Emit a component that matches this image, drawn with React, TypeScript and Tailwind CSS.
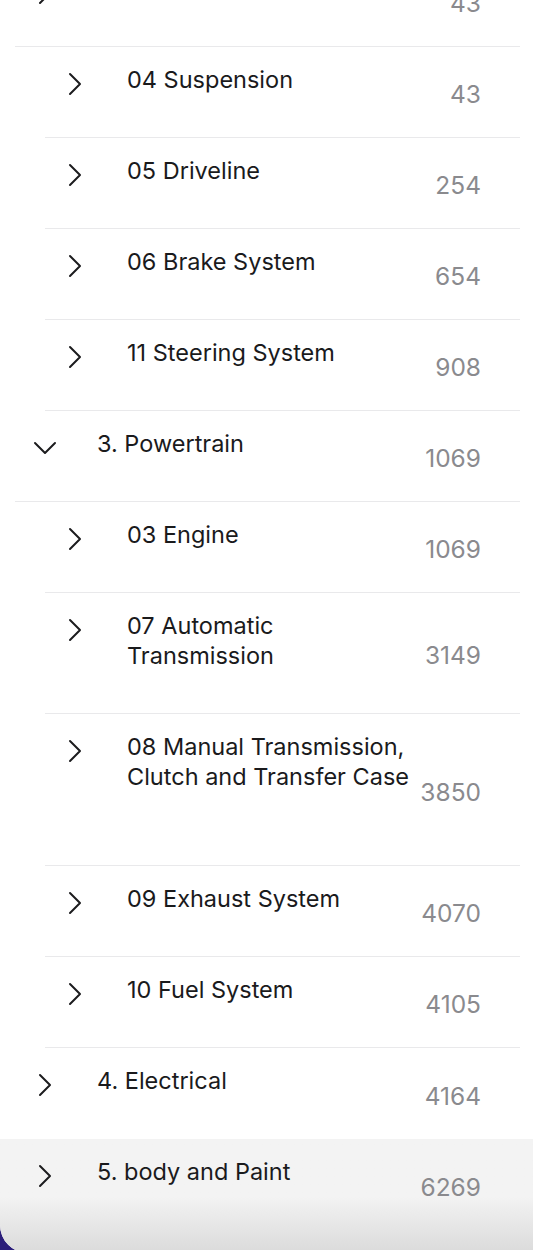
import React from "react";

type Row = {
  level: 0 | 1;
  title: string;
  count: number;
  open?: boolean;
  tall?: boolean;
  selected?: boolean;
};

// line breaks follow the narrower column of the original sidebar
const ROWS: Row[] = [
  { level: 0, title: "2. Chassis", count: 43 },
  { level: 1, title: "04 Suspension", count: 43 },
  { level: 1, title: "05 Driveline", count: 254 },
  { level: 1, title: "06 Brake System", count: 654 },
  { level: 1, title: "11 Steering System", count: 908 },
  { level: 0, title: "3. Powertrain", count: 1069, open: true },
  { level: 1, title: "03 Engine", count: 1069 },
  { level: 1, title: "07 Automatic\nTransmission", count: 3149 },
  { level: 1, title: "08 Manual Transmission,\nClutch and Transfer Case", count: 3850, tall: true },
  { level: 1, title: "09 Exhaust System", count: 4070 },
  { level: 1, title: "10 Fuel System", count: 4105 },
  { level: 0, title: "4. Electrical", count: 4164 },
  { level: 0, title: "5. body and Paint", count: 6269, selected: true },
];

function ChevronRight() {
  return (
    <svg width="14" height="24" viewBox="0 0 14 24" fill="none" className="mt-[25px]">
      <path d="M2 2 L12 12 L2 22" stroke="#1c1c1e" strokeWidth="2" strokeLinecap="round" strokeLinejoin="round" />
    </svg>
  );
}

function ChevronDown() {
  return (
    <svg width="24" height="14" viewBox="0 0 24 14" fill="none" className="mt-[30px]">
      <path d="M2 2 L12 12 L22 2" stroke="#1c1c1e" strokeWidth="2" strokeLinecap="round" strokeLinejoin="round" />
    </svg>
  );
}

function TocRow({ row, last }: { row: Row; last: boolean }) {
  const inner = (
    <div
      className={`flex ${row.level === 0 ? "ml-[15px]" : "ml-[45px]"} mr-[13px] ${
        row.tall ? "min-h-[152px]" : "min-h-[91px]"
      } ${last || row.selected ? "" : "border-b border-[#e9e9eb]"}`}
    >
      <div className="w-[60px] shrink-0 flex justify-center items-start">
        {row.open ? <ChevronDown /> : <ChevronRight />}
      </div>
      <div className="flex-1 whitespace-pre-line pl-[22px] pt-[18px] pb-[42px] text-[23.5px] leading-[30px] text-[#1a1a1c]">
        {row.title}
      </div>
      <div className="flex items-center pt-[4px] pr-[39px] text-[24.5px] leading-[30px] text-[#8a8a8e]">
        {row.count}
      </div>
    </div>
  );

  if (row.selected) {
    return (
      <div className="bg-linear-to-b from-[#f3f3f3] from-50% to-[#dadada] min-h-[115px]">{inner}</div>
    );
  }
  return inner;
}

export default function App() {
  return (
    <div className="h-[1250px] overflow-hidden bg-[#2b1d7a] font-['Inter','Noto_Sans',sans-serif]">
      <div className="h-[1253px] bg-white rounded-bl-[28px] overflow-hidden">
        <div className="mt-[-44px]">
          {ROWS.map((row, i) => (
            <TocRow key={row.title} row={row} last={i === ROWS.length - 2} />
          ))}
        </div>
      </div>
    </div>
  );
}
